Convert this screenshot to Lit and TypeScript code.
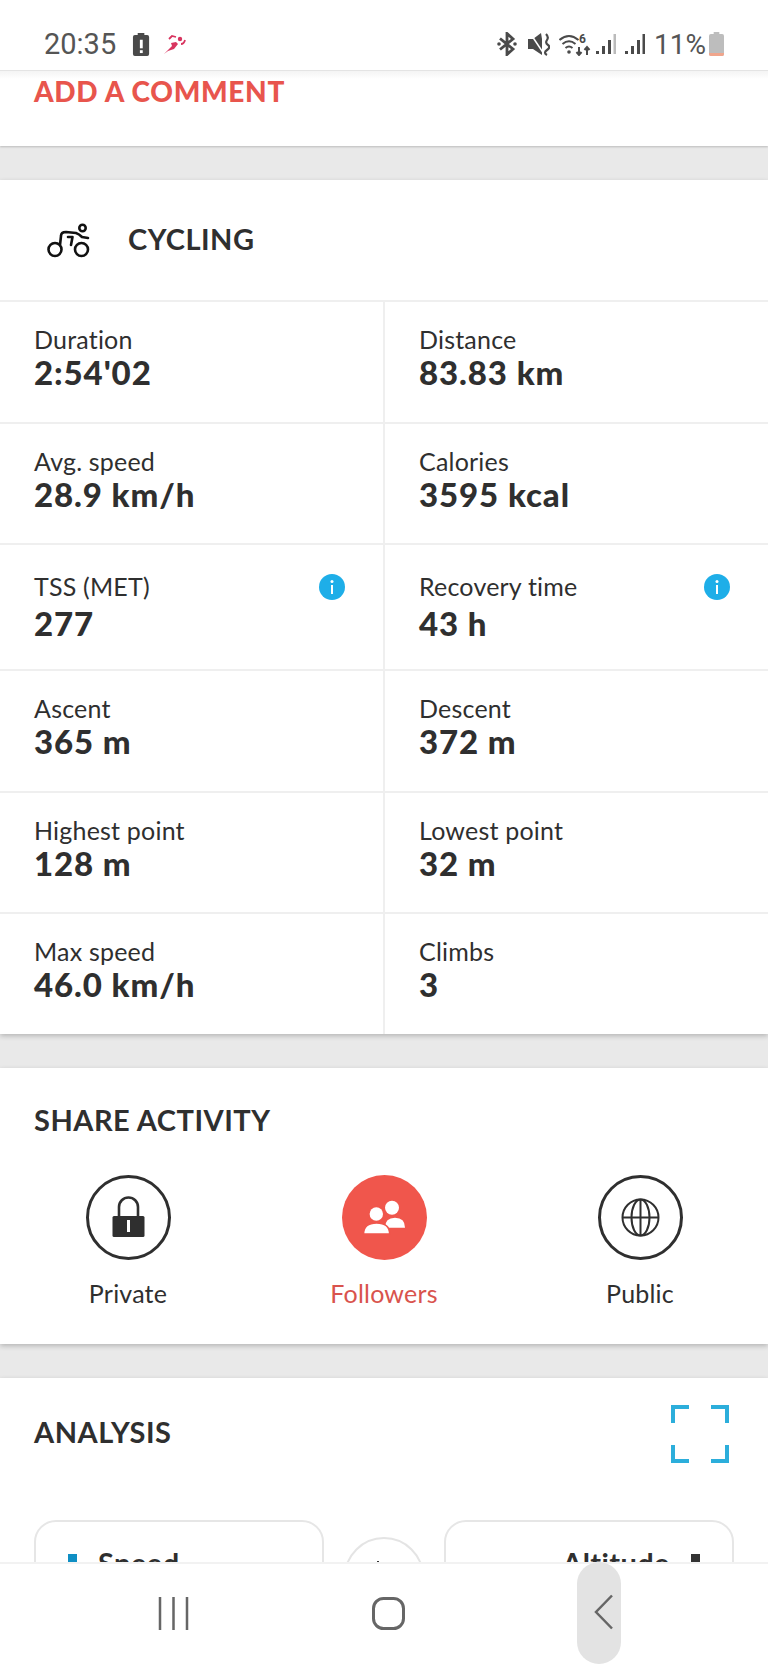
import { LitElement, css, html, svg } from 'lit'
import { customElement } from 'lit/decorators.js'

const stats = [
  [
    { label: 'Duration', value: "2:54'02" },
    { label: 'Distance', value: '83.83 km' },
  ],
  [
    { label: 'Avg. speed', value: '28.9 km/h' },
    { label: 'Calories', value: '3595 kcal' },
  ],
  [
    { label: 'TSS (MET)', value: '277', info: true },
    { label: 'Recovery time', value: '43 h', info: true },
  ],
  [
    { label: 'Ascent', value: '365 m' },
    { label: 'Descent', value: '372 m' },
  ],
  [
    { label: 'Highest point', value: '128 m' },
    { label: 'Lowest point', value: '32 m' },
  ],
  [
    { label: 'Max speed', value: '46.0 km/h' },
    { label: 'Climbs', value: '3' },
  ],
]

const infoIcon = html`<svg class="info" viewBox="0 0 26 26" width="26" height="26">
  <circle cx="13" cy="13" r="13" fill="#1eaee8"></circle>
  <circle cx="13" cy="7.5" r="1.5" fill="#fff"></circle>
  <rect x="12" y="11" width="2" height="9" fill="#fff"></rect>
</svg>`

@customElement('app-root')
export class AppRoot extends LitElement {
  static styles = css`
    :host {
      display: flex;
      flex-direction: column;
      width: 768px;
      height: 1664px;
      overflow: hidden;
      background: #e9e9e9;
      color: #2f2f2f;
      font-family: Lato, 'Liberation Sans', sans-serif;
    }
    .status {
      flex: none;
      height: 71px;
      display: flex;
      align-items: center;
      justify-content: space-between;
      padding: 18px 44px 0 44px;
      box-sizing: border-box;
      background: #fff;
      border-bottom: 1px solid #e4e4e4;
      color: #555;
      font-family: Roboto, sans-serif;
      font-size: 29px;
      position: relative;
      z-index: 2;
    }
    .status-left,
    .status-right {
      display: flex;
      align-items: center;
    }
    .battery-alert {
      margin-left: 16px;
    }
    .runner {
      margin: 2px 0 0 13px;
    }
    .bluetooth {
      margin-right: 11px;
    }
    .mute {
      margin-right: 9px;
    }
    .wifi {
      margin-right: 5px;
    }
    .signal {
      margin-right: 9px;
    }
    .percent {
      font-size: 28px;
      margin-right: 3px;
    }
    .page {
      flex: 1;
      min-height: 0;
      overflow: hidden;
      display: flex;
      flex-direction: column;
    }
    .card {
      flex: none;
      background: #fff;
      box-shadow: 0 2px 5px rgba(0, 0, 0, 0.22);
      margin-bottom: 34px;
    }
    .comment {
      height: 75px;
      padding: 5px 34px 0;
      box-sizing: border-box;
      background: linear-gradient(#f4f4f4, #fff 8px);
      color: #e8554d;
      font-size: 28px;
      letter-spacing: 0.7px;
      font-weight: 900;
      line-height: 30px;
      box-shadow: 0 1px 2px rgba(0, 0, 0, 0.2);
    }
    .sport {
      height: 120px;
      display: flex;
      align-items: center;
      padding-left: 44px;
      box-sizing: border-box;
      font-size: 29px;
      letter-spacing: 0.5px;
      font-weight: 700;
    }
    .sport svg {
      margin-right: 36px;
      margin-top: 2px;
    }
    .sport span {
      margin-bottom: 4px;
    }
    .row {
      display: grid;
      grid-template-columns: 383px 1fr;
      border-top: 2px solid #efefef;
      height: 119.5px;
    }
    .row.tall {
      height: 124px;
    }
    .cell {
      display: flex;
      justify-content: space-between;
      padding: 23px 0 0 34px;
      box-sizing: border-box;
    }
    .cell + .cell {
      border-left: 2px solid #efefef;
    }
    .tall .cell {
      padding-top: 27px;
    }
    .label {
      font-size: 25px;
      letter-spacing: 0.2px;
      line-height: 28px;
    }
    .value {
      font-size: 33px;
      letter-spacing: 0.9px;
      line-height: 36px;
      font-weight: 900;
      margin-top: 1px;
    }
    .tall .value {
      margin-top: 5px;
    }
    .info {
      margin: 2px 38px 0 0;
    }
    h2 {
      margin: 0;
      font-size: 29px;
      letter-spacing: 0.5px;
      line-height: 32px;
      font-weight: 700;
    }
    .share {
      height: 276px;
      padding-top: 36px;
      box-sizing: border-box;
    }
    .share h2 {
      padding-left: 34px;
    }
    .options {
      display: grid;
      grid-template-columns: repeat(3, 256px);
      margin-top: 39px;
    }
    .option {
      display: flex;
      flex-direction: column;
      align-items: center;
      font-size: 25px;
      letter-spacing: 0.2px;
      line-height: 28px;
      gap: 19px;
    }
    .option.active {
      color: #d9534d;
    }
    .analysis {
      flex: 1;
      margin: 0;
      min-height: 400px;
    }
    .analysis-head {
      display: flex;
      justify-content: space-between;
      padding: 27px 39px 0 34px;
    }
    .analysis-head h2 {
      margin-top: 11px;
    }
    .pickers {
      display: grid;
      grid-template-columns: 290px 1fr 290px;
      margin: 57px 34px 0;
      align-items: start;
    }
    .picker {
      height: 120px;
      border: 2px solid #e6e6e6;
      border-radius: 22px;
      box-sizing: border-box;
      padding: 25px 32px;
      display: flex;
      align-items: flex-start;
      gap: 21px;
      font-size: 29px;
      letter-spacing: 0.4px;
      line-height: 32px;
      font-weight: 700;
    }
    .picker.right {
      justify-content: flex-end;
    }
    .picker i {
      flex: none;
      width: 9px;
      height: 18px;
      margin-top: 7px;
      background: #0f8fc4;
    }
    .picker.right i {
      background: #333;
    }
    .swap {
      justify-self: center;
      margin-top: 17px;
      width: 80px;
      height: 80px;
      border: 2px solid #e4e4e4;
      border-radius: 50%;
      box-sizing: border-box;
    }
    .swap i {
      display: block;
      width: 2px;
      height: 8px;
      margin: 22px 0 0 31px;
      background: #333;
    }
    .nav {
      flex: none;
      height: 102px;
      display: flex;
      align-items: center;
      background: #fff;
      border-top: 2px solid #f2f2f2;
      box-sizing: border-box;
      padding-left: 158px;
      position: relative;
      z-index: 2;
    }
    .nav svg {
      margin-bottom: 2px;
    }
    .nav .home {
      margin-left: 183px;
    }
    .nav .pill {
      margin: -2px 0 0 172px;
      width: 44px;
      height: 102px;
      border-radius: 22px;
      background: #e3e3e3;
      display: flex;
      align-items: center;
      justify-content: center;
      padding-left: 10px;
      box-sizing: border-box;
    }
  `

  private renderStatus() {
    return html`<div class="status">
      <div class="status-left">
        <span>20:35</span>
        <svg class="battery-alert" width="19" height="25" viewBox="0 0 20 26">
          <path d="M6 1h7v2h3a2 2 0 0 1 2 2v18a2 2 0 0 1-2 2H3a2 2 0 0 1-2-2V5a2 2 0 0 1 2-2h3z" fill="#4a4a4a"></path>
          <rect x="8.300" y="8" width="3" height="9" fill="#fff"></rect>
          <rect x="8.300" y="19" width="3" height="3" fill="#fff"></rect>
        </svg>
        <svg class="runner" width="22" height="22" viewBox="0 0 22 22">
          <circle cx="16" cy="5" r="2.200" fill="#d8345f"></circle>
          <path d="M5 5l3-3 4 1M17 10q3 0 4-4" fill="none" stroke="#d8345f" stroke-width="1.800"></path>
          <path d="M0 20L8 12 7 9l5-1 2 2-4 5-6 2z" fill="#d8345f"></path>
        </svg>
      </div>
      <div class="status-right">
        <svg class="bluetooth" width="20" height="24" viewBox="0 0 20 24">
          <path d="M3 6.500L16 17l-6 5.500V1.500L16 7 3 17.500" fill="none" stroke="#4a4a4a" stroke-width="2.800"></path>
          <circle cx="2" cy="12" r="1.800" fill="#4a4a4a"></circle>
          <circle cx="18" cy="12" r="1.800" fill="#4a4a4a"></circle>
        </svg>
        <svg class="mute" width="22" height="24" viewBox="0 0 22 24">
          <path d="M0 7h5l8-6 1 6v16l-9-6H0z" fill="#4a4a4a"></path>
          <path d="M2 1l14 21" stroke="#fff" stroke-width="1.500"></path>
          <path d="M18 2q3 3 1 6t1 5-1 5 0 5" fill="none" stroke="#4a4a4a" stroke-width="2.200"></path>
        </svg>
        <svg class="wifi" width="32" height="24" viewBox="0 0 32 24">
          <path d="M.5 8q9.500-8 19 0M3.500 12q6.500-5.500 13 0M6.500 16q3.500-3 7 0" fill="none" stroke="#4a4a4a" stroke-width="2"></path>
          <circle cx="10" cy="20" r="1.800" fill="#4a4a4a"></circle>
          <path d="M20 15v8M17.500 20l2.500 3 2.500-3M28 23v-8M25.500 18l2.500-3 2.500 3" fill="none" stroke="#4a4a4a" stroke-width="2"></path>
          <text x="20" y="11" font-size="12" font-weight="700" font-family="Roboto, sans-serif" fill="#4a4a4a">6</text>
        </svg>
        ${this.renderSignal('#bbb')} ${this.renderSignal('#4a4a4a')}
        <span class="percent">11%</span>
        <svg width="15" height="24" viewBox="0 0 16 24" preserveAspectRatio="none">
          <path d="M5 0h6v2h3a2 2 0 0 1 2 2v18a2 2 0 0 1-2 2H2a2 2 0 0 1-2-2V4a2 2 0 0 1 2-2h3z" fill="#bdbdbd"></path>
          <path d="M0 21h16v1a2 2 0 0 1-2 2H2a2 2 0 0 1-2-2z" fill="#f0a58c"></path>
        </svg>
      </div>
    </div>`
  }

  // last bar takes its own colour, the first of the two icons has it greyed out
  private renderSignal(lastBar: string) {
    return html`<svg class="signal" width="20" height="22" viewBox="0 0 20 22">
      <rect x="0" y="18" width="3" height="3" fill="#4a4a4a"></rect>
      <rect x="6" y="13" width="3" height="8" fill="#4a4a4a"></rect>
      <rect x="12" y="7" width="3" height="14" fill="#4a4a4a"></rect>
      <rect x="17.500" y="1" width="2.500" height="20" fill=${lastBar}></rect>
    </svg>`
  }

  private renderCycle() {
    return html`<svg width="48" height="38" viewBox="44 222 48 38" fill="none" stroke="#111" stroke-width="2.600" stroke-linecap="round" stroke-linejoin="round">
      <circle cx="55" cy="249.500" r="6.500"></circle>
      <circle cx="81.500" cy="249.500" r="6.500"></circle>
      <circle cx="82.500" cy="228" r="3.200"></circle>
      <path d="M60 245l1-9q0-4 5-4l10 1q3 1 6 4l6 1"></path>
      <path d="M68 237h4.500L71 245"></path>
    </svg>`
  }

  private renderStats() {
    return stats.map(
      (row) => html`<div class="row ${row[0].info ? 'tall' : ''}">
        ${row.map(
          (cell) => html`<div class="cell">
            <div>
              <div class="label">${cell.label}</div>
              <div class="value">${cell.value}</div>
            </div>
            ${cell.info ? infoIcon : ''}
          </div>`
        )}
      </div>`
    )
  }

  private renderShare() {
    const lock = svg`<circle cx="42.500" cy="42.500" r="41" fill="none" stroke="#2f2f2f" stroke-width="3"></circle>
      <path d="M33 42V32a9.500 9.500 0 0 1 19 0v10" fill="none" stroke="#2f2f2f" stroke-width="2.600"></path>
      <rect x="26.500" y="41" width="32" height="21" rx="1.500" fill="#2f2f2f"></rect>
      <rect x="41" y="45" width="3" height="12" fill="#fff"></rect>`
    const people = svg`<circle cx="42.500" cy="42.500" r="42.500" fill="#f0564c"></circle>
      <circle cx="50" cy="32.700" r="7" fill="#fff"></circle>
      <path d="M43 52.700q0-10 10-10t10 10z" fill="#fff"></path>
      <circle cx="34.300" cy="39" r="8.300" fill="#f0564c"></circle>
      <circle cx="34.300" cy="39" r="6.700" fill="#fff"></circle>
      <path d="M21.600 59q0-11 13-11t13 11z" fill="#fff" stroke="#f0564c" stroke-width="1.500"></path>`
    const globe = svg`<circle cx="42.500" cy="42.500" r="41" fill="none" stroke="#2f2f2f" stroke-width="3"></circle>
      <g fill="none" stroke="#2f2f2f" stroke-width="2">
        <circle cx="42.500" cy="42.500" r="18"></circle>
        <ellipse cx="42.500" cy="42.500" rx="9" ry="18"></ellipse>
        <path d="M42.500 24.500v36M24.500 42.500h36"></path>
      </g>`
    return html`<div class="card share">
      <h2>SHARE ACTIVITY</h2>
      <div class="options">
        ${[
          { label: 'Private', icon: lock },
          { label: 'Followers', icon: people, active: true },
          { label: 'Public', icon: globe },
        ].map(
          (o) => html`<div class="option ${o.active ? 'active' : ''}">
            <svg width="85" height="85" viewBox="0 0 85 85">${o.icon}</svg>
            <span>${o.label}</span>
          </div>`
        )}
      </div>
    </div>`
  }

  render() {
    return html`
      ${this.renderStatus()}
      <div class="page">
        <div class="card comment">ADD A COMMENT</div>
        <div class="card">
          <div class="sport">${this.renderCycle()}<span>CYCLING</span></div>
          ${this.renderStats()}
        </div>
        ${this.renderShare()}
        <div class="card analysis">
          <div class="analysis-head">
            <h2>ANALYSIS</h2>
            <svg width="58" height="58" viewBox="0 0 58 58" fill="none" stroke="#2caedb" stroke-width="4">
              <path d="M2 18V2h16M40 2h16v16M2 40v16h16M40 56h16V40"></path>
            </svg>
          </div>
          <div class="pickers">
            <div class="picker"><i></i>Speed</div>
            <div class="swap"><i></i></div>
            <div class="picker right">Altitude<i></i></div>
          </div>
        </div>
      </div>
      <div class="nav">
        <svg width="31" height="33" viewBox="0 0 31 33" stroke="#666" stroke-width="2.500">
          <path d="M2 0v33M15.500 0v33M29 0v33"></path>
        </svg>
        <svg class="home" width="33" height="33" viewBox="0 0 33 33" fill="none" stroke="#666" stroke-width="3">
          <rect x="1.500" y="1.500" width="30" height="30" rx="10"></rect>
        </svg>
        <div class="pill">
          <svg width="20" height="36" viewBox="0 0 20 36" fill="none" stroke="#666" stroke-width="2.500">
            <path d="M18 1.500L2 18l16 16.500"></path>
          </svg>
        </div>
      </div>
    `
  }
}
